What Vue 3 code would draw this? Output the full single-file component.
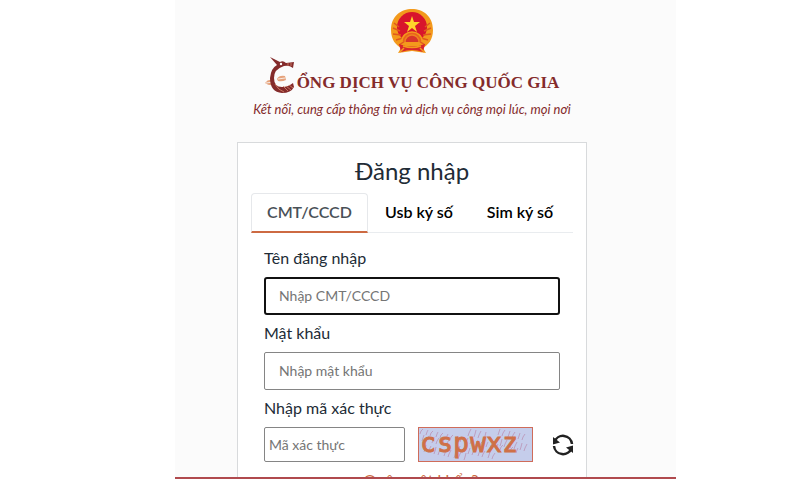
<template>
    <div class="page">
        <main class="portal">
            <header class="brand">
                <!-- National emblem -->
                <svg class="emblem" viewBox="0 0 44 46" role="img" aria-label="Quốc huy">
                    <path d="M22 1C33 1 43 8 43 22c0 10-5 15-10 18l3 5-14-2-14 2 3-5C6 37 1 32 1 22 1 8 11 1 22 1z" fill="#f39a1c" />
                    <circle cx="22" cy="19" r="15" fill="#d8152c" />
                    <path d="M22 8l2 6h6l-5 4 2 6-5-4-5 4 2-6-5-4h6z" fill="#ffd42b" />
                    <path d="M4 15l5 4M3 20l7 3M3 26l8 1M6 32l7-2M9 37l6-4M40 15l-5 4M41 20l-7 3M41 26l-8 1M38 32l-7-2M35 37l-6-4" stroke="#e0581d" stroke-width="1.500" />
                    <path d="M12 33a10 9 0 0 1 20 0" fill="#e9641b" stroke="#f39a1c" stroke-width="1.500" />
                    <path d="M15 34a7 7 0 0 1 14 0" fill="#d8352a" stroke="#ef8420" stroke-width="1.500" />
                    <path d="M9 36q13 5 26 0l-2 8q-11-4-22 0z" fill="#d8252c" />
                    <path d="M13 38q9 3 18 0M10 44l4-4M34 44l-4-4" fill="none" stroke="#f39a1c" stroke-width="1.500" />
                </svg>

                <h1 class="brand-title">
                    <svg class="bird" viewBox="0 0 32 36" role="img" aria-label="C">
                        <path d="M0 26q3-4 7-3l2 5q-5 1-9-2zM12 22q2-4 8-3l1 4q-4 2-8 1z" fill="#e6a37c" />
                        <path d="M1 26l7-1M13 22l7-1" stroke="#fbfbfb" stroke-width="0.800" />
                        <path d="M5 0l10 5q3-2 6 1l8-1-1 6q-4-3-9-2-10 3-10 12 0 9 8 9 6 0 11-4l1 4q-3 6-12 6-12-1-12-15Q6 11 12 8z" fill="#842b2b" />
                        <path d="M19 35q-6-2-9-8M23 34l-5-5M26 33l-5-4M28 31l-4-3M23 6v3M26 6v3" fill="none" stroke="#d98b6e" stroke-width="0.800" />
                        <circle cx="16" cy="7" r="1.200" fill="#fbfbfb" />
                    </svg>
                    <span>ỔNG DỊCH VỤ CÔNG QUỐC GIA</span>
                </h1>
                <p class="slogan">Kết nối, cung cấp thông tin và dịch vụ công mọi lúc, mọi nơi</p>
            </header>

            <section class="card">
                <h2 class="card-title">Đăng nhập</h2>

                <nav class="tabs" role="tablist">
                    <button
                        v-for="tab in tabs"
                        :key="tab"
                        type="button"
                        role="tab"
                        class="tab"
                        :class="{ active: tab === activeTab }"
                        :aria-selected="tab === activeTab"
                        @click="activeTab = tab"
                    >{{ tab }}</button>
                </nav>

                <form class="login" @submit.prevent>
                    <label for="username">Tên đăng nhập</label>
                    <input id="username" v-model="username" class="field current" type="text" placeholder="Nhập CMT/CCCD" />

                    <label for="password">Mật khẩu</label>
                    <input id="password" v-model="password" class="field" type="password" placeholder="Nhập mật khẩu" />

                    <label for="captcha">Nhập mã xác thực</label>
                    <div class="captcha-row">
                        <input id="captcha" v-model="captcha" class="field captcha-field" type="text" placeholder="Mã xác thực" />
                        <svg class="captcha-image" viewBox="0 0 115 35" role="img" aria-label="Mã xác thực">
                            <rect x="0.500" y="0.500" width="114" height="34" fill="#c5cdeb" stroke="#cf6c5a" />
                            <path v-for="(line, i) in noise" :key="i" :d="line" class="noise" />
                            <text v-for="letter in letters" :key="letter.char" :x="letter.x" y="25" class="letter">{{ letter.char }}</text>
                        </svg>
                        <button type="button" class="refresh" aria-label="Đổi mã xác thực">
                            <svg viewBox="0 0 24 24">
                                <path d="M3.500 9A9 9 0 0 1 21 11M20.500 15A9 9 0 0 1 3 13" fill="none" stroke="#222" stroke-width="2.500" />
                                <path d="M2 4v7.500l7-2zM22 20v-7.500l-7 2z" fill="#222" />
                            </svg>
                        </button>
                    </div>
                    <a href="#" class="forgot">Quên mật khẩu?</a>
                </form>
            </section>
        </main>
    </div>
</template>

<script setup>
    import { ref } from 'vue'

    const tabs = ['CMT/CCCD', 'Usb ký số', 'Sim ký số']
    const activeTab = ref(tabs[0])

    const username = ref('')
    const password = ref('')
    const captcha = ref('')

    const letters = [
        { char: 'c', x: 10 },
        { char: 's', x: 27 },
        { char: 'p', x: 43 },
        { char: 'w', x: 60 },
        { char: 'x', x: 76 },
        { char: 'z', x: 92 }
    ]

    // Short slanted scratches over the captcha background
    const noise = Array.from({ length: 60 }, (_, i) => {
        const x = 5 + (i * 37) % 106
        const y = 2 + (i * 17) % 25
        return `M${x} ${y}l${i % 2 - 2} ${2 + i % 3}l-1 3`
    })
</script>

<style>
    body {
        background: #fff;
    }
</style>

<style scoped>
    .page {
        display: flex;
        height: 100vh;
        padding: 0 124px 0 175px;
        box-sizing: border-box;
        font-family: Lato, "Noto Sans", sans-serif;
        font-size: 16px;
        line-height: 24px;
        color: #212b36;
    }

    .portal {
        flex: 1;
        min-width: 0;
        display: flex;
        flex-direction: column;
        align-items: center;
        padding: 8px 27px 0 0;
        box-sizing: border-box;
        overflow: hidden;
        background: #fbfbfb;
        border-bottom: 2px solid #b04a4e;
    }

    .brand {
        display: flex;
        flex-direction: column;
        align-items: center;
        white-space: nowrap;
        color: #842b2b;
    }

    .emblem {
        width: 44px;
        height: 46px;
    }

    .brand-title {
        display: flex;
        align-items: flex-end;
        margin: 3px 0 0;
        font-family: "Liberation Serif", serif;
        font-size: 17px;
        line-height: 20px;
        font-weight: bold;
    }

    .bird {
        width: 32px;
        height: 36px;
    }

    .slogan {
        margin: 4px 0 0;
        font-size: 13px;
        line-height: 24px;
        font-style: italic;
    }

    .card {
        width: 100%;
        max-width: 350px;
        flex: none;
        margin-top: 21px;
        padding: 12px 13px;
        box-sizing: border-box;
        background: #fff;
        border: 1px solid #d8dadc;
    }

    .card-title {
        margin: 0 0 6px;
        font-size: 24px;
        line-height: 32px;
        font-weight: normal;
        text-align: center;
    }

    .tabs {
        display: flex;
        border-bottom: 1px solid #e9ecef;
    }

    .tab {
        height: 40px;
        margin-bottom: -1px;
        padding: 0 16px 2px;
        font: inherit;
        font-weight: 600;
        white-space: nowrap;
        color: #000;
        background: none;
        border: 1px solid transparent;
        border-radius: 4px 4px 0 0;
        cursor: pointer;
    }

    .tab.active {
        padding: 0 15px 2px;
        color: #495057;
        background: #fff;
        border-color: #e6e8eb;
        border-bottom: 2px solid #cd6a42;
    }

    .login {
        display: flex;
        flex-direction: column;
        padding: 13px 13px 0;
    }

    .field {
        height: 38px;
        margin: 7px 0 6px;
        padding: 0 14px 2px;
        box-sizing: border-box;
        min-width: 0;
        font: inherit;
        font-size: 14px;
        color: #212b36;
        background: #fff;
        border: 1px solid #858585;
        border-radius: 2px;
    }

    .field.current {
        padding: 0 13px 2px;
        border: 2px solid #111;
        border-radius: 3px;
    }

    .field::placeholder {
        color: #757575;
        opacity: 1;
    }

    .captcha-row {
        display: flex;
        align-items: center;
        gap: 13px;
        margin: 7px -15px 6px 0;
    }

    .captcha-field {
        flex: 1;
        height: 35px;
        margin: 0;
        padding: 0 4px;
    }

    .captcha-image {
        flex: none;
        width: 115px;
        height: 35px;
    }

    .noise {
        fill: none;
        stroke: #bd9fc0;
        stroke-width: 1px;
    }

    .letter {
        font-family: "DejaVu Sans Mono", monospace;
        font-size: 26px;
        text-anchor: middle;
        fill: #cf7048;
        stroke: #cf7048;
        stroke-width: 1px;
    }

    .refresh {
        flex: none;
        width: 24px;
        height: 24px;
        margin-left: 5px;
        padding: 0;
        background: none;
        border: none;
        cursor: pointer;
    }

    .refresh svg {
        display: block;
    }

    .forgot {
        align-self: center;
        margin-left: 18px;
        color: #cd6a42;
        text-decoration: none;
    }
</style>
